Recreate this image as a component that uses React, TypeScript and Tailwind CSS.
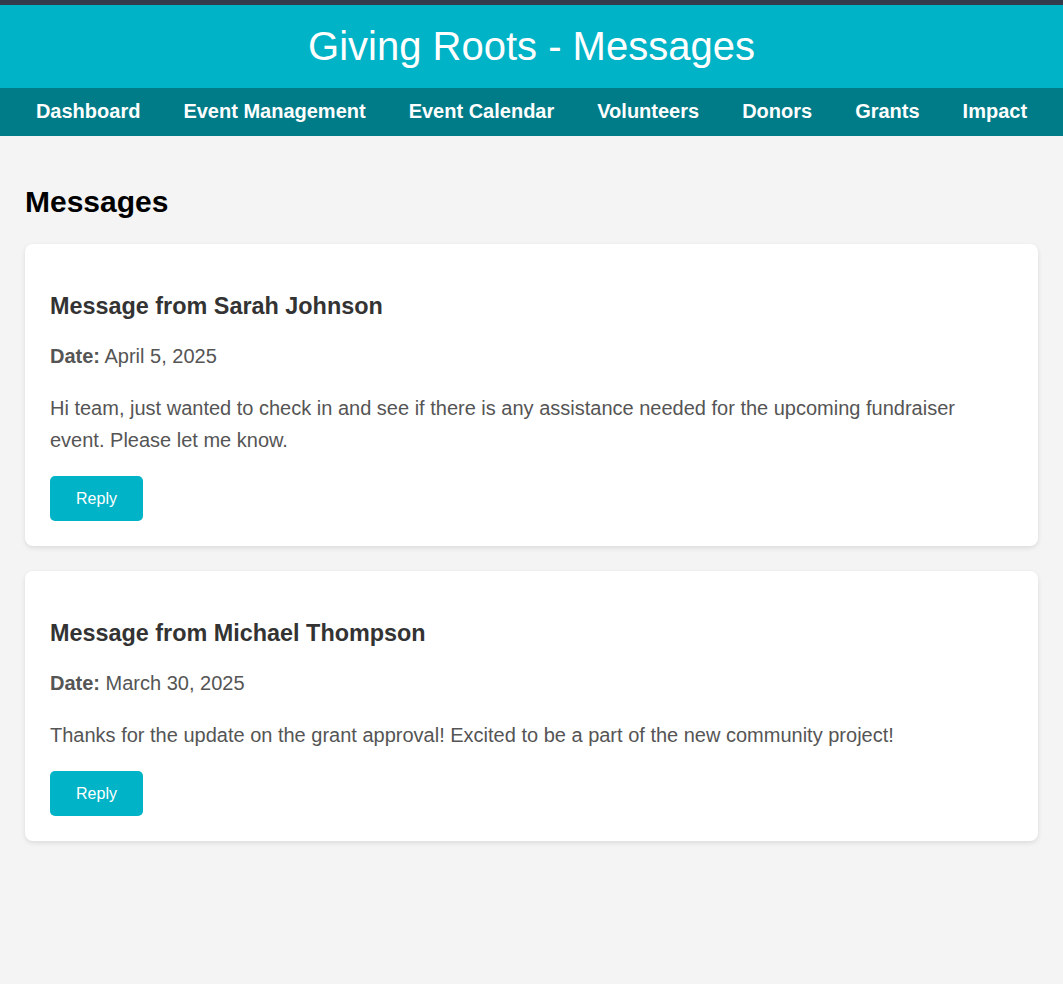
export default function App() {
  const nav = ["Dashboard", "Event Management", "Event Calendar", "Volunteers", "Donors", "Grants", "Impact"];
  const messages = [
    {
      from: "Sarah Johnson",
      date: "April 5, 2025",
      body: "Hi team, just wanted to check in and see if there is any assistance needed for the upcoming fundraiser event. Please let me know.",
    },
    {
      from: "Michael Thompson",
      date: "March 30, 2025",
      body: "Thanks for the update on the grant approval! Excited to be a part of the new community project!",
    },
  ];
  return (
    <div className="min-h-[984px] bg-[#f4f4f4] font-['Liberation_Sans',Arial,sans-serif]">
      <div className="h-[5px] bg-[#343b4a]" />
      <header className="h-[83px] bg-[#00b3c6] flex items-center justify-center pb-[2px]">
        <h1 className="text-[40px] leading-[44px] text-white font-normal">Giving Roots - Messages</h1>
      </header>
      <nav className="h-[48px] bg-[#007c89] flex items-center justify-center gap-[43px] pb-[2px]">
        {nav.map((n) => (
          <a key={n} className="text-white font-bold text-[20px] leading-[24px]">
            {n}
          </a>
        ))}
      </nav>
      <main className="px-[25px] pt-[50px] pb-[25px]">
        <h2 className="text-[30px] leading-[32px] font-bold text-black">Messages</h2>
        <div className="mt-[26px] flex flex-col gap-[25px]">
          {messages.map((m) => (
            <div key={m.from} className="bg-white rounded-[8px] shadow-[0_2px_5px_rgba(0,0,0,0.1)] p-[25px]">
              <h3 className="mt-[24px] text-[23.4px] leading-[26px] font-bold text-[#333]">Message from {m.from}</h3>
              <p className="mt-[21px] text-[20px] leading-[32px] text-[#555]">
                <strong className="font-bold">Date:</strong> {m.date}
              </p>
              <p className="mt-[20px] text-[20px] leading-[32px] text-[#555]">{m.body}</p>
              <button className="mt-[20px] h-[45px] w-[93px] rounded-[5px] bg-[#00b3c6] text-white text-[16px]">
                Reply
              </button>
            </div>
          ))}
        </div>
      </main>
    </div>
  );
}
